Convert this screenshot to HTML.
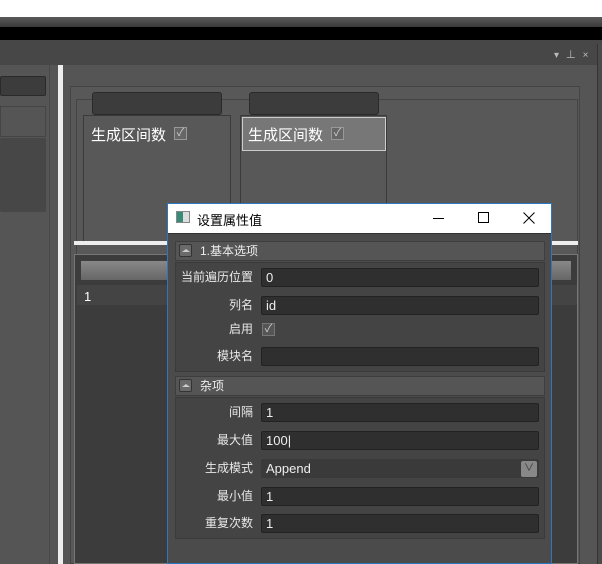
<!DOCTYPE html>
<html><head><meta charset="utf-8"><style>
*{margin:0;padding:0;box-sizing:border-box}
body{width:602px;height:564px;overflow:hidden;background:#555;position:relative;font-family:"Liberation Sans","Noto Sans CJK SC",sans-serif;font-size:13px;color:#eee}
.a{position:absolute}
.inp{position:absolute;left:261px;width:278px;height:19px;background:#2f2f2f;border:1px solid #222;border-radius:2px;color:#eee;padding-left:4px;line-height:17px;font-size:13px}
.lbl{position:absolute;left:176px;width:77px;text-align:right;color:#e8e8e8;font-size:12px;line-height:19px;white-space:nowrap}
.sh{position:absolute;left:175px;width:370px;height:20px;background:#555;border:1px solid #3e3e3e;line-height:18px;padding-left:24px;color:#eee;font-size:12px}
.sh i{position:absolute;left:3px;top:2px;width:13px;height:13px;background:#6a6a6a;border:1px solid #333;border-radius:2px}
.sh i:after{content:"";position:absolute;left:2px;top:4px;border-left:4px solid transparent;border-right:4px solid transparent;border-bottom:3px solid #ccc}
.sec{position:absolute;left:175px;width:370px;background:#444;border:1px solid #3a3a3a}
.cb{position:absolute;width:13px;height:13px;background:#666;border:1px solid #999;color:#ccc;font-size:11px;line-height:11px;text-align:center}
</style></head><body>
<div class="a" style="left:0;top:0;width:602px;height:17px;background:#fff"></div>
<div class="a" style="left:0;top:17px;width:602px;height:10px;background:linear-gradient(#5a5a5a,#3a3a3a)"></div>
<div class="a" style="left:0;top:27px;width:602px;height:13px;background:#000"></div>
<div class="a" style="left:0;top:40px;width:602px;height:25px;background:#474747"></div>
<div class="a" style="left:554px;top:46px;color:#bbb;font-size:10px;letter-spacing:2px">▾ ⊥ ×</div>
<div class="a" style="left:597px;top:44px;width:5px;height:520px;background:#4a4a4a;border-left:1px solid #333"></div>
<div class="a" style="left:0;top:76px;width:46px;height:20px;background:#3c3c3c;border:1px solid #2a2a2a;border-radius:2px"></div>
<div class="a" style="left:0;top:106px;width:46px;height:31px;background:#555;border:1px solid #444"></div>
<div class="a" style="left:0;top:138px;width:46px;height:74px;background:#474747;border-radius:2px"></div>
<div class="a" style="left:49px;top:65px;width:1px;height:499px;background:#484848"></div>
<div class="a" style="left:58px;top:65px;width:5px;height:499px;background:#eee"></div>
<div class="a" style="left:70px;top:86px;width:510px;height:478px;border:1px solid #444;background:#585858"></div>
<div class="a" style="left:76px;top:99px;width:502px;height:465px;border:1px solid #444"></div>
<div class="a" style="left:92px;top:92px;width:130px;height:23px;background:#3c3c3c;border:1px solid #2a2a2a;border-radius:3px"></div>
<div class="a" style="left:249px;top:92px;width:130px;height:23px;background:#3c3c3c;border:1px solid #2a2a2a;border-radius:3px"></div>
<div class="a" style="left:83px;top:115px;width:148px;height:130px;border:1px solid #3a3a3a"></div>
<div class="a" style="left:240px;top:115px;width:147px;height:130px;border:1px solid #3a3a3a"></div>
<div class="a" style="left:242px;top:117px;width:144px;height:34px;background:#777;border:1px solid #ccc"></div>
<div class="a" style="left:91px;top:124px;font-size:15px;color:#fff">生成区间数</div>
<div class="cb" style="left:174px;top:127px">✓</div>
<div class="a" style="left:248px;top:124px;font-size:15px;color:#fff">生成区间数</div>
<div class="cb" style="left:331px;top:127px">✓</div>
<div class="a" style="left:74px;top:241px;width:504px;height:4px;background:#eee"></div>
<div class="a" style="left:74px;top:254px;width:504px;height:310px;background:#3c3c3c;border:1px solid #777"></div>
<div class="a" style="left:81px;top:261px;width:490px;height:19px;background:linear-gradient(#888,#666)"></div>
<div class="a" style="left:77px;top:285px;width:500px;height:20px;background:#444"></div>
<div class="a" style="left:84px;top:289px;color:#fff">1</div>
<div class="a" style="left:167px;top:203px;width:385px;height:361px;background:#4b4b4b;border:1px solid #2b78c0"></div>
<div class="a" style="left:168px;top:204px;width:383px;height:30px;background:#fff;border-bottom:1px solid #333"></div>
<div class="a" style="left:176px;top:211px;width:14px;height:12px;border:1px solid #888;background:linear-gradient(90deg,#3a8a7a 50%,#ddd 50%)"></div>
<div class="a" style="left:197px;top:210px;color:#000;font-size:13px">设置属性值</div>
<div class="a" style="left:433px;top:218px;width:11px;height:1px;background:#000"></div>
<div class="a" style="left:478px;top:212px;width:11px;height:11px;border:1px solid #000"></div>
<svg class="a" style="left:523px;top:212px" width="12" height="12"><path d="M0.5 0.5L11.5 11.5M11.5 0.5L0.5 11.5" stroke="#000" stroke-width="1"/></svg>
<div class="sh" style="top:241px"><i></i>1.基本选项</div>
<div class="sec" style="top:262px;height:110px"></div>
<div class="lbl" style="top:268px">当前遍历位置</div><div class="inp" style="top:268px">0</div>
<div class="lbl" style="top:296px">列名</div><div class="inp" style="top:296px">id</div>
<div class="lbl" style="top:320px">启用</div><div class="cb" style="left:262px;top:323px;background:#555;border-color:#777">✓</div>
<div class="lbl" style="top:347px">模块名</div><div class="inp" style="top:347px"></div>
<div class="sh" style="top:376px"><i></i>杂项</div>
<div class="sec" style="top:397px;height:142px"></div>
<div class="lbl" style="top:403px">间隔</div><div class="inp" style="top:403px">1</div>
<div class="lbl" style="top:431px">最大值</div><div class="inp" style="top:431px">100|</div>
<div class="lbl" style="top:459px">生成模式</div><div class="inp" style="top:459px;background:#3a3a3a;border-color:#3a3a3a">Append<span style="position:absolute;right:1px;top:1px;width:16px;height:16px;background:#888;border-radius:2px;color:#333;font-size:10px;text-align:center;line-height:16px">∨</span></div>
<div class="lbl" style="top:487px">最小值</div><div class="inp" style="top:487px">1</div>
<div class="lbl" style="top:514px">重复次数</div><div class="inp" style="top:514px">1</div>
</body></html>
